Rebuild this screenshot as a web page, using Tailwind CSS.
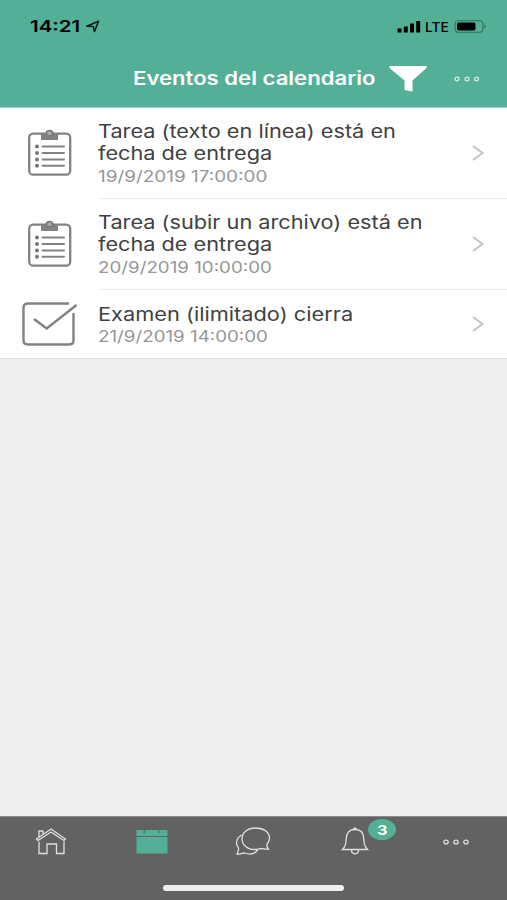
<!DOCTYPE html>
<html lang="es">
<head>
<meta charset="utf-8">
<title>Eventos del calendario</title>
<script src="https://cdn.jsdelivr.net/npm/@tailwindcss/browser@4"></script>
</head>
<body>
<svg width="0" height="0" class="hidden">
  <symbol id="clipboard" viewBox="0 0 46 48">
    <rect x="2.200" y="4.700" width="41" height="41" rx="4" fill="none" stroke="#828282" stroke-width="2.300"/>
    <path d="M14 5H31V11H14Z" fill="#828282"/>
    <ellipse cx="22.500" cy="4.300" rx="3.300" ry="2.800" fill="#aaa" stroke="#777" stroke-width="1.700"/>
    <path d="M15.500 17.500H37M15.500 24H37M15.500 30.500H37M15.500 36.800H37" stroke="#828282" stroke-width="2" stroke-linecap="round"/>
    <path d="M10 17.500h.01M10 24h.01M10 30.500h.01M10 36.800h.01" stroke="#777" stroke-width="4" stroke-linecap="round"/>
  </symbol>
  <symbol id="chevron" viewBox="0 0 14 18">
    <path d="M2 2L11.500 9L2 16" fill="none" stroke="#c4c4c6" stroke-width="2.100"/>
  </symbol>
</svg>
<div class="flex h-[900px] w-[507px] flex-col overflow-hidden bg-[#eeeeee] font-['Inter','Liberation_Sans',sans-serif]">
  <header class="h-[108px] shrink-0 border-b border-[#9fd1c1] bg-[#53b096]">
    <div class="flex h-[52px] items-center pl-[30px] pr-[19px] text-black">
      <div class="w-[56px]"><span class="inline-block origin-left scale-x-[1.28] text-[16px] font-semibold leading-5">14:21</span></div>
      <svg class="h-[13px] w-[15px]" viewBox="0 0 15 13"><path d="M.8 6.200L12.500 1.200L8.500 11.500L7.300 6.500Z" fill="none" stroke="#0b211b" stroke-width="1.600" stroke-linejoin="round"/></svg>
      <div class="grow"></div>
      <svg class="h-[13px] w-[24px]" viewBox="0 0 24 13"><path d="M.5 8.500h4v4h-4zM6.800 6.500h4v6h-4zM13 3.500h4v9h-4zM19.200 1h4v11.500h-4z"/></svg>
      <div class="ml-[4px] w-[25px]"><span class="inline-block origin-left scale-x-[1.06] text-[13px] font-medium leading-5">LTE</span></div>
      <svg class="ml-[4px] h-[13px] w-[34px]" viewBox="0 0 34 13"><rect x="1" y=".8" width="28" height="11.500" rx="3.500" fill="none" stroke="#2c705d" stroke-width="1.100"/><rect x="3" y="2.600" width="18.500" height="8" rx="1.800"/><path d="M30.500 4.500Q33.500 6.500 30.500 8.500Z" fill="#2c705d"/></svg>
    </div>
    <div class="flex h-[52px] items-center pl-[133px] pr-[26px]">
      <h1 class="w-[256px] whitespace-nowrap"><span class="inline-block origin-left scale-x-[1.195] text-[18.500px] font-semibold leading-6 text-white">Eventos del calendario</span></h1>
      <svg class="h-[27px] w-[38px]" viewBox="0 0 38 27"><path d="M.5 1H37.500V3L23.500 15.500V26.500L15.500 25V15.500L.5 3Z" fill="#fff"/></svg>
      <div class="grow"></div>
      <svg class="mt-px h-[8px] w-[28px]" viewBox="0 0 28 8" fill="none" stroke="#d3ece4" stroke-width="1.300"><ellipse cx="4" cy="4" rx="2" ry="1.800"/><ellipse cx="14" cy="4" rx="2" ry="1.800"/><ellipse cx="23.500" cy="4" rx="2" ry="1.800"/></svg>
    </div>
  </header>
  <main class="grow">
    <ul class="border-b border-[#dedede] bg-white">
      <li class="flex h-[91px] pl-[27px]">
        <svg class="mt-[21px] h-[48px] w-[46px] shrink-0"><use href="#clipboard"/></svg>
        <div class="ml-[25px] flex grow items-center border-b border-[#ececec] pr-[22px]">
          <div class="grow whitespace-nowrap pt-px"><p class="origin-left scale-x-[1.173] text-[18.500px] leading-[22px] text-[#414141]">Tarea (texto en línea) está en<br>fecha de entrega</p><p class="mt-[3px] origin-left scale-x-[1.22] text-[15.500px] leading-5 text-[#969696]">19/9/2019 17:00:00</p></div>
          <svg class="h-[18px] w-[14px] shrink-0"><use href="#chevron"/></svg>
        </div>
      </li>
      <li class="flex h-[91px] pl-[27px]">
        <svg class="mt-[21px] h-[48px] w-[46px] shrink-0"><use href="#clipboard"/></svg>
        <div class="ml-[25px] flex grow items-center border-b border-[#ececec] pr-[22px]">
          <div class="grow whitespace-nowrap pt-px"><p class="origin-left scale-x-[1.173] text-[18.500px] leading-[22px] text-[#414141]">Tarea (subir un archivo) está en<br>fecha de entrega</p><p class="mt-[3px] origin-left scale-x-[1.21] text-[15.500px] leading-5 text-[#969696]">20/9/2019 10:00:00</p></div>
          <svg class="h-[18px] w-[14px] shrink-0"><use href="#chevron"/></svg>
        </div>
      </li>
      <li class="flex h-[68px] items-center pl-[21px]">
        <svg class="h-[46px] w-[57px] shrink-0" viewBox="0 0 57 46" fill="none" stroke="#828282" stroke-width="2.400"><path d="M48 2.500H7Q2.500 2.500 2.500 6.500V39.500Q2.500 43.500 7 43.500H48Q52.500 43.500 52.500 39.500V12M13 18L25.700 27.500L55.500 4"/></svg>
        <div class="ml-[20px] flex grow items-center pr-[22px]">
          <div class="grow whitespace-nowrap pt-px"><p class="origin-left scale-x-[1.177] text-[18.500px] leading-[22px] text-[#414141]">Examen (ilimitado) cierra</p><p class="mt-[2px] origin-left scale-x-[1.21] text-[15.500px] leading-5 text-[#969696]">21/9/2019 14:00:00</p></div>
          <svg class="h-[18px] w-[14px] shrink-0"><use href="#chevron"/></svg>
        </div>
      </li>
    </ul>
  </main>
  <footer class="h-[84px] shrink-0 border-t border-[#8c8c8c] bg-[#626262]">
    <nav class="grid h-[48px] grid-cols-5 items-center justify-items-center">
      <svg class="h-[28px] w-[32px]" viewBox="0 0 32 28" fill="none" stroke="#e0e0e0" stroke-width="1.300"><path d="M4 14.500V26.500H12V17H21.500V26.500H29V14.500M1.500 12L16 2L30.500 12L29 13.500L16 5L3 13.500ZM4 10V4H8V7"/></svg>
      <svg class="h-[27px] w-[32px]" viewBox="0 0 32 27"><path d="M.5 2H31.500V8H.5ZM.5 9H31.500V25.500H.5Z" fill="#53b096"/><path d="M8 5.500Q8 2.500 10 1M22.500 1V3L24 5" fill="none" stroke="#397e6b" stroke-width="1.200"/></svg>
      <svg class="h-[30px] w-[36px]" viewBox="0 0 36 30" fill="none" stroke="#e0e0e0" stroke-width="1.300"><path d="M20.500 2C12 2 7 7 7 12.500C7 19 12.500 23.500 20 23.500C23.500 23.500 25 22.500 26.500 22.500C29 22.500 31 23.800 33.500 23.200C32.200 21.500 31.500 20 32 18.500C33.500 16.500 34.500 14.500 34.500 12C34.500 6 28.500 2 20.500 2ZM6.500 9C3 11 1.500 14 1.500 17C1.500 19 3 21 3.500 22C4 24 3 26 2 28.200C5 28.500 7 26.800 9.500 27C15 29 20 28 23 23.700"/></svg>
      <div class="relative">
        <svg class="h-[28px] w-[28px]" viewBox="0 0 28 28" fill="none" stroke="#e0e0e0" stroke-width="1.300"><path d="M14 2.500C8 2.500 5.200 6.500 5.200 12C5.200 18 4 20 1.500 22.500H26.500C24 20 22.800 18 22.800 12C22.800 6.500 20 2.500 14 2.500ZM10.500 23C10.500 28 17.500 28 17.500 23"/><path d="M12.500 2Q14 1 15.500 2" stroke-width="2"/></svg>
        <div class="absolute left-[27px] top-[-8px] flex h-[21px] w-[28px] items-center justify-center rounded-[50%] bg-[#53b096] text-white"><span class="inline-block scale-x-[1.25] text-[13px] font-bold leading-4">3</span></div>
      </div>
      <svg class="mt-px h-[8px] w-[28px]" viewBox="0 0 28 8" fill="none" stroke="#e0e0e0" stroke-width="1.300"><ellipse cx="4" cy="4" rx="2.200" ry="1.900"/><ellipse cx="14" cy="4" rx="2.200" ry="1.900"/><ellipse cx="24" cy="4" rx="2.200" ry="1.900"/></svg>
    </nav>
    <div class="mx-auto mt-[20px] h-[6px] w-[181px] rounded-full bg-[#efefef]"></div>
  </footer>
</div>
</body>
</html>
